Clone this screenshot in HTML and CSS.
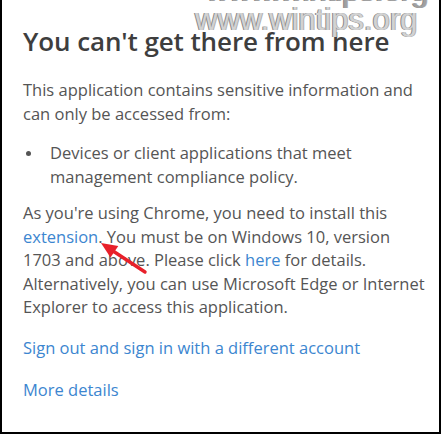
FILE: index.html
```html
<!DOCTYPE html>
<html lang="en">
<head>
<meta charset="utf-8">
<title>You can't get there from here</title>
<link rel="stylesheet" href="styles.css">
</head>
<body>
<div class="frame">
  <div class="mark mark-top">www.wintips.org</div>
  <div class="mark mark-main">www.wintips.org</div>
  <h1 class="title">You can't get there from here</h1>
  <p class="text">This application contains sensitive information and can only be accessed from:</p>
  <ul class="list">
    <li>Devices or client applications that meet management compliance policy.</li>
  </ul>
  <p class="text">As you're using Chrome, you need to install this <a class="link" href="#">extension</a>. You must be on Windows 10, version 1703 and above. Please click <a class="link" href="#">here</a> for details. Alternatively, you can use Microsoft Edge or Internet Explorer to access this application.</p>
  <p class="action"><a class="link" href="#">Sign out and sign in with a different account</a></p>
  <p class="action"><a class="link" href="#">More details</a></p>
  <svg class="arrow" width="56" height="42" viewBox="0 0 56 42">
    <line x1="49" y1="36" x2="17" y2="15" stroke="#e8202a" stroke-width="3.4" stroke-linecap="round"/>
    <polygon points="5,7 22.3,9.9 14.5,21.6" fill="#e8202a"/>
  </svg>
</div>
</body>
</html>
```
FILE: styles.css
```css
html, body {
  margin: 0;
  padding: 0;
  background: #fff;
}

.frame {
  position: relative;
  box-sizing: border-box;
  width: 441px;
  height: 434px;
  border-left: 2px solid #000;
  border-right: 2px solid #000;
  border-bottom: 2px solid #000;
  padding: 24px 10px 0 21px;
  font-family: "Open Sans", "Noto Sans", sans-serif;
  color: #555;
  overflow: hidden;
}

.title {
  margin: 0 0 20px;
  font-size: 26px;
  font-weight: 600;
  color: #3e3e3e;
  letter-spacing: -0.1px;
  line-height: 34px;
}

.text {
  margin: 0;
  font-size: 16.5px;
  line-height: 23.5px;
}

.list {
  margin: 16px 0 13px;
  padding: 0;
  list-style: none;
  font-size: 16.5px;
  line-height: 23.5px;
}

.list li {
  position: relative;
  padding-left: 27px;
}

.list li::before {
  content: "";
  position: absolute;
  left: 3px;
  top: 10px;
  width: 5px;
  height: 5px;
  border-radius: 50%;
  background: #555;
}

.action {
  margin: 17px 0 0;
  font-size: 16.5px;
  line-height: 23.5px;
}

.action + .action {
  margin-top: 18.5px;
}

.link {
  color: #3c86d0;
  text-decoration: none;
}

/* site watermark laid over the top edge */
.mark {
  position: absolute;
  left: 193px;
  font-family: "Liberation Sans", Arial, sans-serif;
  font-size: 31px;
  color: #d2d2d2;
  text-shadow: -1px 0 #878787, 1px 0 #b0b0b0;
  white-space: nowrap;
  line-height: 1;
}

.mark-main {
  top: 4px;
}

.mark-top {
  top: -25px;
  left: 204px;
  color: #a0a0a0;
}

.arrow {
  position: absolute;
  left: 94px;
  top: 236px;
}
```
